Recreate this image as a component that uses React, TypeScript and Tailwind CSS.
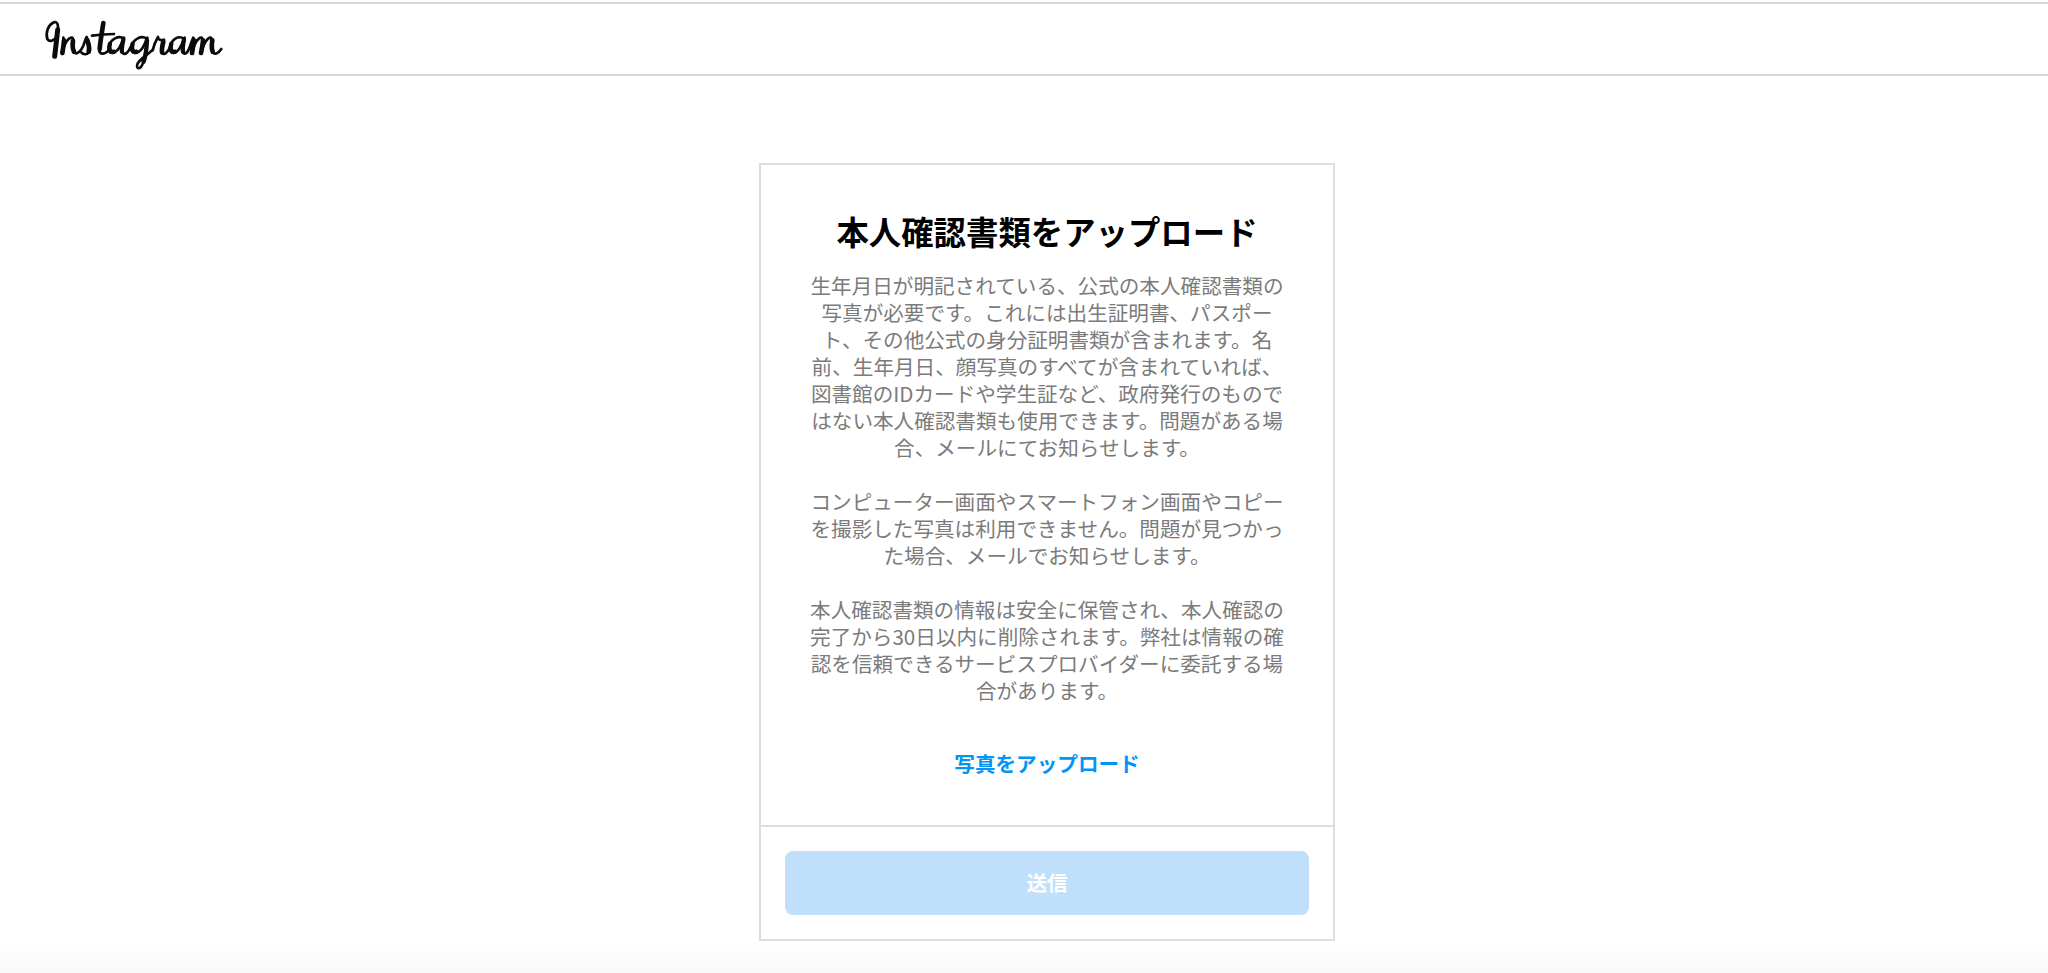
import React from 'react';

const jp = '[font-family:"Noto_Sans_CJK_JP","Liberation_Sans",sans-serif]';

function InstagramLogo() {
  // wordmark, drawn as a script stroke; coords are 3x screen pixels
  return (
    <svg viewBox="0 4 600 216" className="w-[200px] h-[72px]" role="img" aria-label="Instagram">
      <g fill="none" stroke="#0b0b0b" strokeLinecap="round" strokeLinejoin="round">
        {/* thin connecting strokes */}
        <path strokeWidth="8" d="M52 112 C46 92 54 70 72 62 C84 58 86 74 83 92 M52 112 C58 122 70 118 82 106" />
        <path strokeWidth="8" d="M100 108 C102 122 99 140 96 157 C102 132 112 108 126 108 C136 110 126 140 132 152 C140 160 152 150 160 132 C164 122 166 112 170 106 C176 122 184 138 178 150 C172 160 160 160 154 152" />
        <path strokeWidth="8" d="M208 142 C207 160 222 160 236 146 M186 102 C205 100 225 98 252 97" />
        <path strokeWidth="8" d="M282 112 C268 100 240 110 236 138 C234 160 254 158 268 138 C274 128 278 118 282 108 C278 126 272 146 278 154 C286 162 296 150 302 136" />
        <path strokeWidth="8" d="M350 112 C336 100 308 110 304 138 C302 160 324 158 338 138 C344 128 348 118 352 108 C350 136 346 164 338 186 C330 206 318 202 322 188 C328 172 350 162 366 146" />
        <path strokeWidth="8" d="M368 146 C372 130 378 116 384 106 C384 114 392 118 402 114 C398 128 394 146 396 154 C402 162 414 152 420 136" />
        <path strokeWidth="8" d="M462 112 C448 100 424 110 420 138 C418 160 438 158 450 138 C456 128 460 118 464 108 C460 126 456 146 460 154 C466 160 474 150 478 140" />
        <path strokeWidth="8" d="M478 140 C482 128 486 116 490 108 C490 124 486 142 484 156 C490 134 502 108 514 108 C522 110 514 140 512 156 C518 134 530 108 542 108 C552 110 542 140 548 152 C554 160 566 154 574 142" />
        {/* heavy downstrokes */}
        <path strokeWidth="15" d="M83 84 C80 112 77 140 74 164" />
        <path strokeWidth="14" d="M102 116 C101 130 99 142 97 154 M129 118 C127 130 128 142 132 150 M172 116 C176 128 180 138 176 150" />
        <path strokeWidth="14" d="M220 64 C216 90 211 118 209 142" />
        <path strokeWidth="13" d="M240 126 C235 142 240 154 252 150 M280 114 C277 128 274 142 276 150" />
        <path strokeWidth="13" d="M308 126 C303 142 308 154 320 150 M351 116 C350 140 347 162 341 180" />
        <path strokeWidth="14" d="M400 120 C397 132 395 144 396 152" />
        <path strokeWidth="13" d="M424 126 C419 142 424 154 436 150 M462 114 C459 128 457 142 459 150" />
        <path strokeWidth="14" d="M492 116 C490 130 488 142 486 154 M519 116 C518 130 515 144 513 154 M547 116 C545 128 545 142 548 150" />
      </g>
    </svg>
  );
}

export default function App() {
  return (
    <div className={`flex flex-col h-[973px] overflow-hidden bg-white ${jp}`}>
      {/* Header */}
      <header className="flex items-center h-[74px] mt-[2px] border-y-2 border-[#d9d9d9] pl-[30px]">
        <InstagramLogo />
      </header>

      <main className="flex-1 flex justify-center items-start pt-[87px] pl-[46px]">
        <div className="flex flex-col w-[576px] h-[778px] border-2 border-[#dedede] bg-white">
          <div className="flex-1 px-[46px] pt-[46px] text-center">
            <h1 className="text-[32.4px] leading-[40px] font-bold text-black">本人確認書類をアップロード</h1>
            <div className="mt-[21px] space-y-[27px] text-[20.6px] leading-[27px] text-[#7b7b7b]">
              <p>生年月日が明記されている、公式の本人確認書類の写真が必要です。これには出生証明書、パスポート、その他公式の身分証明書類が含まれます。名前、生年月日、顔写真のすべてが含まれていれば、図書館のIDカードや学生証など、政府発行のものではない本人確認書類も使用できます。問題がある場合、メールにてお知らせします。</p>
              <p>コンピューター画面やスマートフォン画面やコピーを撮影した写真は利用できません。問題が見つかった場合、メールでお知らせします。</p>
              <p>本人確認書類の情報は安全に保管され、本人確認の完了から30日以内に削除されます。弊社は情報の確認を信頼できるサービスプロバイダーに委託する場合があります。</p>
            </div>
            <button className="mt-[46px] text-[20.6px] leading-[27px] font-bold text-[#0095f6]">写真をアップロード</button>
          </div>
          <div className="border-t-2 border-[#dedede] p-[24px]">
            <button className="w-full h-[64px] pb-[2px] rounded-[8px] bg-[#bfdffb] text-white text-[20.6px] font-bold">送信</button>
          </div>
        </div>
      </main>

      <div className="h-[28px] bg-gradient-to-b from-white to-[#f8f8f8]" />
    </div>
  );
}
